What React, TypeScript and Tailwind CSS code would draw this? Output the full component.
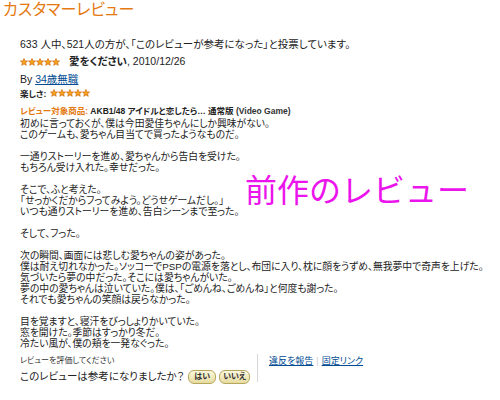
import React from "react";

const FONT = "font-['Liberation_Sans','Noto_Sans_CJK_JP',sans-serif] [font-feature-settings:'palt']";

function Star({ size = 8 }: { size?: number }) {
  return (
    <svg width={size} height={size} viewBox="0 0 10 10" className="block">
      <polygon
        points="5,0.6 6.3,3.6 9.5,3.8 7,5.9 7.8,9.2 5,7.4 2.2,9.2 3,5.9 0.5,3.8 3.7,3.6"
        fill="#f7a21a"
        stroke="#c7620a"
        strokeWidth="0.8"
        strokeLinejoin="round"
      />
    </svg>
  );
}

function Stars({ size = 8 }: { size?: number }) {
  return (
    <span className="inline-flex items-center">
      {[0, 1, 2, 3, 4].map((i) => (
        <Star key={i} size={size} />
      ))}
    </span>
  );
}

const body = [
  "初めに言っておくが、僕は今田愛佳ちゃんにしか興味がない。",
  "このゲームも、愛ちゃん目当てで買ったようなものだ。",
  "",
  "一通りストーリーを進め、愛ちゃんから告白を受けた。",
  "もちろん受け入れた。幸せだった。",
  "",
  "そこで、ふと考えた。",
  "「せっかくだからフってみよう。どうせゲームだし。」",
  "いつも通りストーリーを進め、告白シーンまで至った。",
  "",
  "そして、フった。",
  "",
  "次の瞬間、画面には悲しむ愛ちゃんの姿があった。",
  "僕は耐え切れなかった。ソッコーでPSPの電源を落とし、布団に入り、枕に顔をうずめ、無我夢中で奇声を上げた。",
  "気づいたら夢の中だった。そこには愛ちゃんがいた。",
  "夢の中の愛ちゃんは泣いていた。僕は、「ごめんね、ごめんね」と何度も謝った。",
  "それでも愛ちゃんの笑顔は戻らなかった。",
  "",
  "目を覚ますと、寝汗をびっしょりかいていた。",
  "窓を開けた。季節はすっかり冬だ。",
  "冷たい風が、僕の頬を一発なぐった。",
];

export default function App() {
  return (
    <div className={`relative w-[500px] h-[400px] overflow-hidden bg-white text-[#222] ${FONT}`}>
      {/* title */}
      <h2 className="pl-[3px] pt-[1px] text-[16px] leading-[18px] text-[#e47911] font-normal">
        カスタマーレビュー
      </h2>

      <div className="pl-[20px] pt-[18px]">
        <div className="text-[10.5px] leading-[14px]">
          633 人中、521人の方が、「このレビューが参考になった」と投票しています。
        </div>

        <div className="mt-[4px] flex items-center h-[14px] text-[10.5px]">
          <Stars size={8} />
          <span className="ml-[9px] font-bold">愛をください</span>
          <span>, 2010/12/26</span>
        </div>

        <div className="mt-[3px] h-[14px] leading-[14px] text-[10.5px]">
          By{" "}
          <a className="text-[#004b91] underline">34歳無職</a>
        </div>

        <div className="mt-[2px] flex items-center h-[12px] text-[8.5px] font-bold">
          <span>楽しさ:</span>
          <span className="ml-[4px]">
            <Stars size={8} />
          </span>
        </div>

        <div className="mt-[5px] h-[12px] leading-[12px] text-[8.5px] font-bold whitespace-nowrap">
          <span className="text-[#e47911]">レビュー対象商品: </span>
          <span>AKB1/48 アイドルと恋したら… 通常版 </span>
          <span className="text-[#333]">(Video Game)</span>
        </div>

        <div className="mt-[1px] text-[9.8px] leading-[11px] whitespace-nowrap">
          {body.map((line, i) => (
            <div key={i} className="h-[11px]">
              {line}
            </div>
          ))}
        </div>

        {/* bottom */}
        <div className="mt-[6px] flex">
          <div className="w-[237px]">
            <div className="text-[8px] leading-[12px] text-[#333]">レビューを評価してください</div>
            <div className="mt-[2px] flex items-center h-[16px] text-[10.5px]">
              <span>このレビューは参考になりましたか？</span>
              <button className="ml-[4px] w-[28px] h-[14px] rounded-[6px] border border-[#b5a65c] bg-gradient-to-b from-[#fbf7dc] to-[#e6dca0] text-[8px] font-bold text-[#333] leading-none">
                はい
              </button>
              <button className="ml-[3px] w-[31px] h-[14px] rounded-[6px] border border-[#b5a65c] bg-gradient-to-b from-[#fbf7dc] to-[#e6dca0] text-[8px] font-bold text-[#333] leading-none">
                いいえ
              </button>
            </div>
          </div>
          <div className="border-l border-[#d6d6d6] pl-[11px] h-[28px] -mt-[1px]">
            <div className="text-[9px] leading-[14px] flex items-center">
              <a className="text-[#004b91] underline">違反を報告</a>
              <span className="mx-[3px] text-[#ccc]">|</span>
              <a className="text-[#004b91] underline">固定リンク</a>
            </div>
          </div>
        </div>
      </div>

      {/* overlay annotation */}
      <div className="absolute left-[245px] top-[169px] text-[32px] leading-[38px] text-[#ec14ec] font-['Noto_Sans_CJK_JP',sans-serif] [font-feature-settings:normal] whitespace-nowrap">
        前作のレビュー
      </div>
    </div>
  );
}
